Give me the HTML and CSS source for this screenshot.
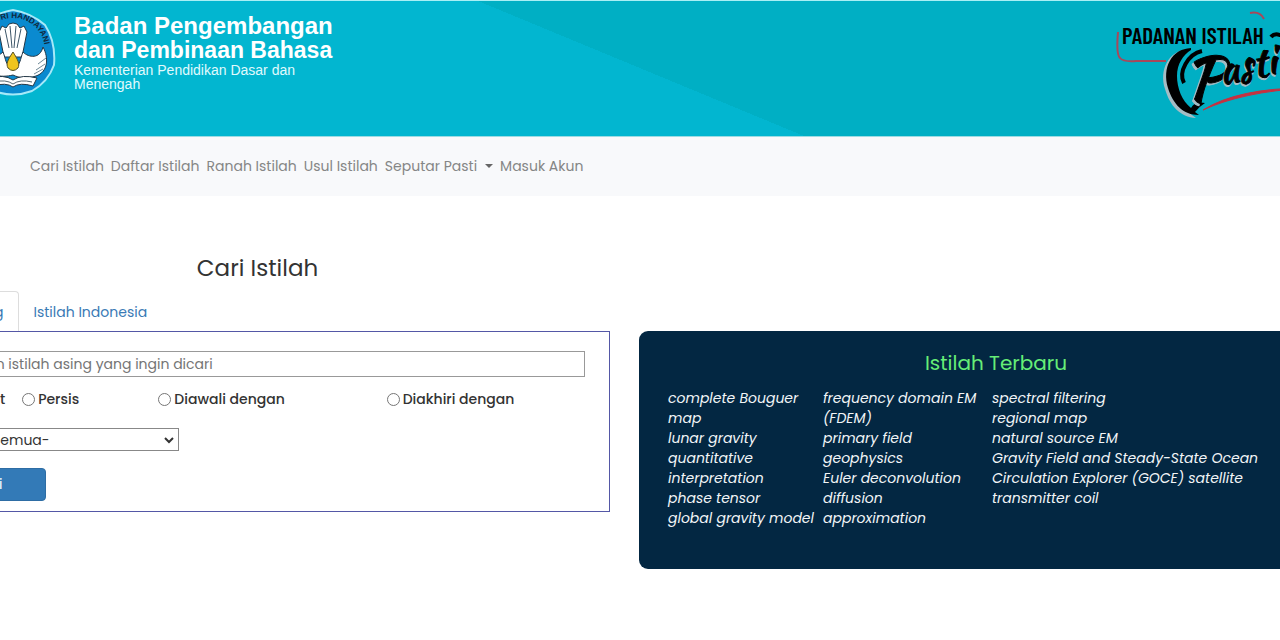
FILE: index.html
```
<!doctype html>
<html lang="id">
<head>
    <meta charset="UTF-8">
    <meta name="viewport" content="width=device-width, initial-scale=1.0">
    <title>Padanan Istilah</title>
    <link rel="stylesheet" href="styles.css">
</head>
<body>

<header class="header">
    <div class="brand">
        <svg class="emblem" width="86" height="90" viewBox="0 0 86 90" aria-hidden="true">
            <path d="M43 2 Q61 5 75 17 Q86 34 84 57 Q78 74 62 83 Q43 90 24 83 Q8 74 2 57 Q0 34 11 17 Q25 5 43 2Z" fill="#0a8ad0" stroke="#a5e9f8" stroke-width="2"/>
            <path id="motto" d="M11 42 A32 32 0 0 1 75 42" fill="none"/>
            <text class="motto"><textPath href="#motto" startOffset="7">TUT WURI HANDAYANI</textPath></text>
            <path d="M34 49 L29 24 L32 18 L36 20 L39 16 L43 15 L47 16 L50 20 L54 18 L57 24 L52 49Z" fill="#fff" stroke="#243746" stroke-width="1"/>
            <path d="M35 21 L39 40 M40 18 L42 40 M46 18 L44 40 M51 21 L47 40" fill="none" stroke="#3c5568" stroke-width="1"/>
            <path d="M43 67 C31 70 16 68 10 55 C8 48 10 46 15 42 C16 51 27 50 33 44 C36 51 35 57 43 61 C51 57 50 51 53 44 C59 50 70 51 73 39 C79 50 78 64 66 68 C57 71 49 70 43 67Z" fill="#fff" stroke="#243746" stroke-width="1"/>
            <path d="M66 62 L75 56 M64 66 L73 61 M20 62 L11 56 M22 66 L13 61 M68 56 L76 50" fill="none" stroke="#6d8795" stroke-width="1"/>
            <path d="M43 44 C37 53 36 56 38 60 Q43 65 48 60 C50 56 48 52 43 44Z" fill="#efc51e" stroke="#555025" stroke-width="1"/>
            <path d="M19 70 Q34 66 43 72 Q52 66 67 70 L63 78 Q50 74 43 79 Q36 74 23 78Z" fill="#fff" stroke="#243746" stroke-width="1"/>
            <path d="M24 74 Q36 71 43 76 Q50 71 62 74" fill="none" stroke="#53656e" stroke-width="1"/>
        </svg>
        <div class="brand-text">
            <div class="brand-name">Badan Pengembangan</div>
            <div class="brand-name second">dan Pembinaan Bahasa</div>
            <div class="brand-sub">Kementerian Pendidikan Dasar dan<br>Menengah</div>
        </div>
    </div>
    <svg class="pasti" width="200" height="115" viewBox="0 0 200 115" role="img" aria-label="Padanan Istilah Pasti">
        <path d="M2 24 Q0 46 4 50 Q7 54 20 53 L50 53" fill="none" stroke="#a8485a" stroke-width="2"/>
        <path d="M134 5 Q144 3 148 11" fill="none" stroke="#a8485a" stroke-width="2"/>
        <text class="pasti-top" x="6" y="36">PADANAN ISTILAH</text>
        <g class="swash">
            <path class="shade" d="M72 41 C52 43 43 62 49 81 C54 98 64 109 80 110 C68 102 60 86 59 70 C59 58 64 49 72 43Z"/>
            <path d="M75 40 C55 41 46 60 52 80 C57 96 67 107 83 107 L79 104 Q84 98 89 95 Q79 93 75 100 C66 93 61 80 61 68 C61 56 67 47 75 42Z"/>
            <path class="thin" d="M86 43 C72 46 62 64 68 75"/>
        </g>
        <text class="pasti-name cap shade-text" transform="translate(69 94) rotate(-4)">P</text>
        <text class="pasti-name cap" transform="translate(71 92) rotate(-4)">P</text>
        <text class="pasti-name shade-text" transform="translate(105 79) rotate(-12)">asti</text>
        <text class="pasti-name" transform="translate(106 77) rotate(-12)">asti</text>
        <path d="M155 29 Q158 25 164 27 L190 27" fill="none" stroke="#000" stroke-width="4"/>
        <path d="M87 102 Q122 80 190 80 Q126 84 87 102Z" fill="#c8303f" stroke="#c8303f" stroke-width="1"/>
    </svg>
</header>

<nav class="navbar">
    <a href="#">Cari Istilah</a>
    <a href="#">Daftar Istilah</a>
    <a href="#">Ranah Istilah</a>
    <a href="#">Usul Istilah</a>
    <a href="#" class="dropdown">Seputar Pasti</a>
    <a href="#">Masuk Akun</a>
</nav>

<main class="content">
    <section class="search">
        <h1>Cari Istilah</h1>
        <div class="tabs">
            <a href="#" class="tab active">Istilah Asing</a>
            <a href="#" class="tab">Istilah Indonesia</a>
        </div>
        <form class="search-form">
            <input type="text" class="keyword" aria-label="Istilah asing" placeholder="Masukkan istilah asing yang ingin dicari">
            <div class="options">
                <label><input type="radio" name="mode" checked>Memuat</label>
                <label><input type="radio" name="mode">Persis</label>
                <label><input type="radio" name="mode">Diawali dengan</label>
                <label><input type="radio" name="mode">Diakhiri dengan</label>
            </div>
            <div class="field">
                <label for="ranah">Ranah</label>
                <div class="select-box">
                    <select id="ranah">
                        <option>-Semua-</option>
                    </select>
                    <svg width="10" height="8" viewBox="0 0 10 8" aria-hidden="true"><path d="M1 2 L5 6 L9 2" fill="none" stroke="#333" stroke-width="2"/></svg>
                </div>
            </div>
            <button type="submit" class="btn">Cari</button>
        </form>
    </section>

    <section class="latest">
        <h2>Istilah Terbaru</h2>
        <div class="terms">
            <ul>
                <li>complete Bouguer map</li>
                <li>lunar gravity</li>
                <li>quantitative interpretation</li>
                <li>phase tensor</li>
                <li>global gravity model</li>
            </ul>
            <ul>
                <li>frequency domain EM (FDEM)</li>
                <li>primary field</li>
                <li>geophysics</li>
                <li>Euler deconvolution</li>
                <li>diffusion approximation</li>
            </ul>
            <ul>
                <li>spectral filtering</li>
                <li>regional map</li>
                <li>natural source EM</li>
                <li>Gravity Field and Steady-State Ocean Circulation Explorer (GOCE) satellite</li>
                <li>transmitter coil</li>
            </ul>
        </div>
    </section>
</main>

</body>
</html>
```
FILE: styles.css
```
* {
    box-sizing: border-box;
}

body {
    margin: 0;
    overflow-x: hidden;
    background: #fff;
    color: #333;
    font-family: Poppins, Inter, sans-serif;
    font-size: 14px;
}

a {
    text-decoration: none;
}

/* header */
.header {
    display: flex;
    justify-content: space-between;
    align-items: flex-start;
    height: 137px;
    margin: 0 -36px 0 -30px;
    padding-top: 7px;
    border-top: 1px solid #a9eff5;
    border-bottom: 1px solid #9ddce3;
    background: linear-gradient(to bottom left, #00afc4 50%, #02b6d0 50%) 508px 0 / 326px 100% no-repeat,
        linear-gradient(to right, #02b6d0 560px, #00afc4 560px);
}

.brand {
    display: flex;
    gap: 18px;
    color: #fff;
    font-family: "Liberation Sans", sans-serif;
}

.brand-text {
    padding-top: 5px;
}

.brand-name {
    font-size: 24px;
    font-weight: bold;
    line-height: 25px;
}

.brand-name.second {
    font-size: 23px;
}

.brand-sub {
    font-size: 14px;
    line-height: 14px;
    color: #e0fafd;
}

.motto {
    font: bold 8px "Liberation Sans", sans-serif;
    fill: #10283c;
}

.pasti-top {
    font: 600 23px "Barlow Condensed", "Liberation Sans Narrow", Roboto, sans-serif;
}

.pasti-name {
    font: 400 41px "Kaushan Script", Lato, sans-serif;
    stroke: #000;
    stroke-width: 1;
}

.pasti-name.cap {
    font-size: 58px;
}

.pasti-name.shade-text {
    fill: #a5bcc4;
    stroke: #a5bcc4;
}

.swash .shade {
    fill: #a5bcc4;
}

.swash .thin {
    fill: none;
    stroke: #000;
    stroke-width: 4;
}

/* menu */
.navbar {
    display: flex;
    align-items: center;
    gap: 7px;
    height: 59px;
    padding: 0 30px;
    background: #f8f9fb;
}

.navbar a {
    color: #858686;
}

.dropdown::after {
    content: '';
    display: inline-block;
    margin-left: 8px;
    vertical-align: 3px;
    border-top: 4px solid #666;
    border-left: 4px solid transparent;
    border-right: 4px solid transparent;
}

/* content */
.content {
    display: grid;
    grid-template-columns: 705fr 714fr;
    gap: 29px;
    align-items: start;
    margin: 0 -73px 0 -95px;
    padding-top: 54px;
}

h1 {
    margin: 0;
    font-size: 23px;
    font-weight: 400;
    line-height: 36px;
    text-align: center;
}

.tabs {
    display: flex;
    margin-top: 5px;
}

.tab {
    height: 40px;
    padding: 0 14px;
    border: 1px solid transparent;
    border-bottom: none;
    color: #3a7ab5;
    line-height: 40px;
}

.tab.active {
    border-color: #ddd;
    border-radius: 4px 4px 0 0;
}

.search-form {
    padding: 19px 24px 10px;
    border: 1px solid #5457a6;
}

.keyword {
    display: block;
    width: 100%;
    height: 26px;
    padding: 0 3px;
    border: 1px solid #999;
    color: #333;
    font: inherit;
}

.keyword::placeholder {
    color: #757575;
}

.options {
    display: grid;
    grid-template-columns: 92fr 136fr 228fr 198fr;
    margin-top: 12px;
    font-weight: 500;
    line-height: 20px;
}

.options label {
    display: flex;
    align-items: center;
    gap: 3px;
}

.options input {
    width: 13px;
    height: 13px;
    margin: 0;
}

.field {
    display: flex;
    align-items: center;
    gap: 4px;
    margin-top: 19px;
}

.select-box {
    display: grid;
    width: 200px;
    align-items: center;
}

.select-box select,
.select-box svg {
    grid-area: 1 / 1;
}

.select-box svg {
    justify-self: end;
    margin-right: 5px;
    pointer-events: none;
}

select {
    appearance: none;
    height: 23px;
    padding: 0 4px;
    border: 1px solid #888;
    border-radius: 0;
    background: #fff;
    color: #333;
    font: inherit;
}

.btn {
    width: 116px;
    height: 33px;
    margin-top: 17px;
    border: 1px solid #2e6da4;
    border-radius: 4px;
    background: #337ab7;
    color: #fff;
    font: inherit;
}

.latest {
    min-height: 238px;
    margin-top: 81px;
    padding: 17px 29px;
    border-radius: 9px;
    background: #032742;
}

h2 {
    margin: 0;
    color: #66ee77;
    font-size: 20px;
    font-weight: 400;
    line-height: 30px;
    text-align: center;
}

.terms {
    display: grid;
    grid-template-columns: 148px 162px 1fr;
    gap: 7px;
    margin-top: 10px;
    padding-right: 50px;
    color: #f2f5f7;
    font-style: italic;
    line-height: 20px;
}

.terms ul {
    margin: 0;
    padding: 0;
    list-style: none;
}
```
